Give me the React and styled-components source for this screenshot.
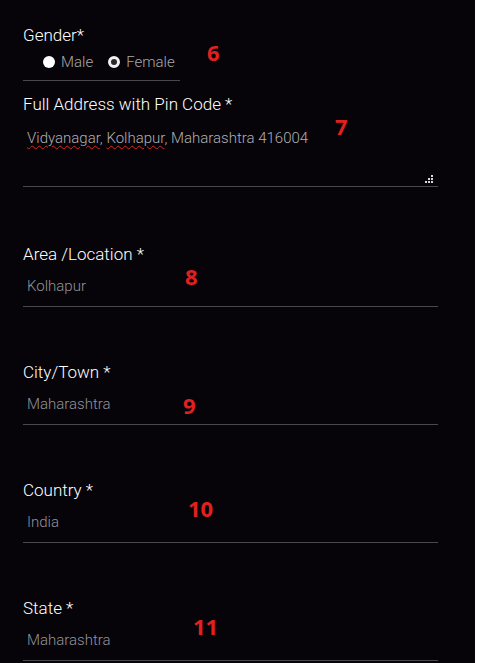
import React from 'react';
import styled, { createGlobalStyle } from 'styled-components';

const GlobalStyle = createGlobalStyle`
  html, body {
    margin: 0;
    padding: 0;
    background: #ffffff;
  }
`;

// dark form panel, a thin white strip remains on the right
const Page = styled.div`
  width: 475px;
  min-height: 663px;
  background: #070409;
  box-sizing: border-box;
  padding: 25px 0 0 23px;
  font-family: Roboto, 'Noto Sans', sans-serif;
`;

const Field = styled.div`
  position: relative;
  width: ${(p) => p.width || 415}px;
  margin-top: ${(p) => p.gap || 0}px;
`;

const Label = styled.div`
  font-size: 17px;
  font-weight: 300;
  line-height: 20px;
  color: #ffffff;
`;

const RadioGroup = styled.div`
  display: flex;
  align-items: center;
  gap: 15px;
  height: 20px;
  margin-top: 7px;
  padding: 0 0 8px 20px;
  border-bottom: 1px solid #4a474d;
`;

const RadioOption = styled.label`
  display: flex;
  align-items: center;
  gap: 6px;
  font-size: 15px;
  font-weight: 300;
  color: #a9a8ac;
`;

const RadioDot = styled.span`
  width: 12px;
  height: 12px;
  border-radius: 50%;
  box-sizing: border-box;
  background: ${(p) => (p.checked ? '#2a2a2a' : '#ffffff')};
  border: ${(p) => (p.checked ? '3px solid #f2f2f2' : 'none')};
`;

const TextArea = styled.div`
  position: relative;
  height: 73px;
  box-sizing: border-box;
  padding: 14px 4px 0;
  border-bottom: 1px solid #4a474d;
  font-size: 15px;
  font-weight: 300;
  line-height: 20px;
  color: #b0afb3;
`;

const Misspelled = styled.span`
  text-decoration: underline wavy #d9261c;
  text-decoration-thickness: 1px;
  text-underline-offset: 2px;
`;

const ResizeGrip = styled.svg`
  position: absolute;
  right: 4px;
  bottom: 2px;
`;

const Input = styled.div`
  height: 43px;
  box-sizing: border-box;
  padding: 12px 4px 10px;
  border-bottom: 1px solid #4a474d;
  font-size: 15px;
  font-weight: 300;
  line-height: 20px;
  color: #949398;
`;

const Marker = styled.span`
  position: absolute;
  left: ${(p) => p.x}px;
  top: ${(p) => p.y}px;
  font-family: 'Open Sans', 'Liberation Sans', sans-serif;
  font-weight: 700;
  font-size: 22px;
  line-height: 1;
  color: #e0211f;
`;

const fields = [
  { label: 'Area /Location *', value: 'Kolhapur', mark: '8', mx: 162, my: 21, gap: 57 },
  { label: 'City/Town *', value: 'Maharashtra', mark: '9', mx: 160, my: 32, gap: 55 },
  { label: 'Country *', value: 'India', mark: '10', mx: 165, my: 17, gap: 55 },
  { label: 'State *', value: 'Maharashtra', mark: '11', mx: 170, my: 17, gap: 55 },
];

const App = () => {
  return (
    <>
      <GlobalStyle />
      <Page>
        <Field width={157}>
          <Label>Gender*</Label>
          <RadioGroup>
            <RadioOption>
              <RadioDot />
              Male
            </RadioOption>
            <RadioOption>
              <RadioDot checked />
              Female
            </RadioOption>
          </RadioGroup>
          <Marker x={184} y={16}>6</Marker>
        </Field>

        <Field gap={13}>
          <Label>Full Address with Pin Code *</Label>
          <TextArea>
            <Misspelled>Vidyanagar</Misspelled>, <Misspelled>Kolhapur</Misspelled>, Maharashtra 416004
            <ResizeGrip width="10" height="9" viewBox="0 0 10 9">
              <rect x="7" y="0" width="2" height="2" fill="#d8d8d8" />
              <rect x="4" y="3" width="2" height="2" fill="#d8d8d8" />
              <rect x="7" y="3" width="2" height="2" fill="#d8d8d8" />
              <rect x="1" y="6" width="2" height="2" fill="#d8d8d8" />
              <rect x="4" y="6" width="2" height="2" fill="#d8d8d8" />
              <rect x="7" y="6" width="2" height="2" fill="#d8d8d8" />
            </ResizeGrip>
          </TextArea>
          <Marker x={312} y={21}>7</Marker>
        </Field>

        {fields.map((f) => (
          <Field key={f.label} gap={f.gap}>
            <Label>{f.label}</Label>
            <Input>{f.value}</Input>
            <Marker x={f.mx} y={f.my}>{f.mark}</Marker>
          </Field>
        ))}
      </Page>
    </>
  );
};

export default App;
